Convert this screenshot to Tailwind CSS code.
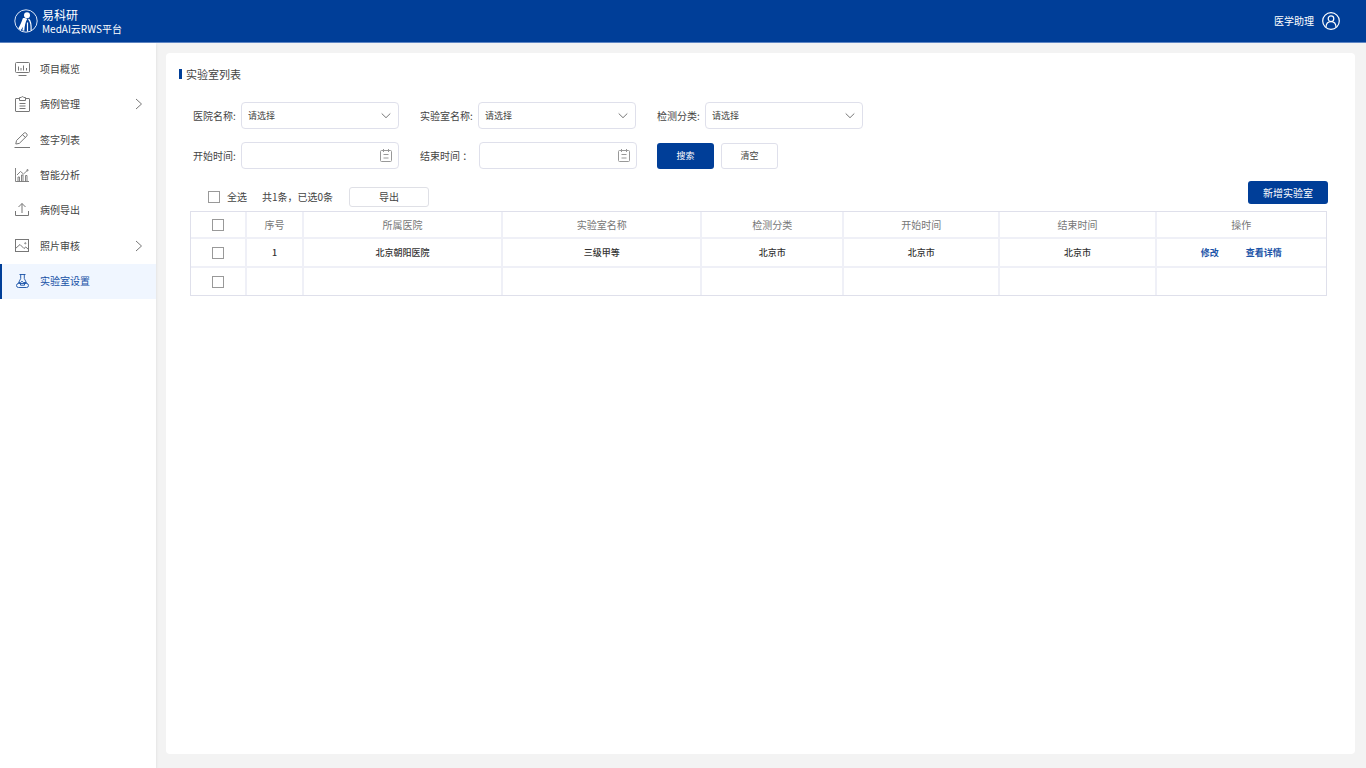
<!DOCTYPE html>
<html lang="zh-CN">
<head>
<meta charset="utf-8">
<meta name="viewport" content="width=device-width, initial-scale=1">
<title>实验室列表 - 易科研</title>
<script src="https://cdn.jsdelivr.net/npm/@tailwindcss/browser@4"></script>
</head>
<body class="min-h-screen flex flex-col bg-[#f3f3f3] text-[10px] leading-4 text-[#444] font-['Noto_Sans_CJK_SC',sans-serif]">

<header class="h-[43px] shrink-0 flex items-center justify-between pl-3.5 pr-[26px] bg-[#003e98] border-b border-[#5f86c4] text-white">
  <a href="#" class="flex items-center gap-1">
    <svg class="size-6" viewBox="0 0 24 24" fill="none" aria-hidden="true">
      <circle cx="12" cy="12" r="11.2" stroke="#dbe6f7" stroke-width="1"/>
      <circle cx="13" cy="6.300" r="3" fill="#fff"/>
      <path d="M8.800 9.300c1.500-.6 3.200-.2 4.400.8-1.700 3-2.500 6.500-2.900 11.700l-2-.4.800-3.600-2.300 3.400-2.500-1.700C6.200 16.500 7.600 13 8.800 9.300z" fill="#fff"/>
      <path d="M14.500 10c2.300 2 2.900 6 2.600 11.800M13.500 13.500v9" stroke="#fff" stroke-width="1.200"/>
    </svg>
    <span class="flex flex-col gap-px">
      <span class="text-[12px] leading-[14px]">易科研</span>
      <span class="text-[10px] leading-3">MedAI云RWS平台</span>
    </span>
  </a>
  <button type="button" class="flex items-center gap-2">
    <span>医学助理</span>
    <svg class="size-[18px]" viewBox="0 0 18 18" fill="none" stroke="#fff" stroke-width="1.200" aria-hidden="true">
      <circle cx="9" cy="9" r="8.300"/>
      <circle cx="9" cy="6.700" r="2.800"/>
      <path d="M4 15.200c.1-3.200 2-5.600 5-5.600s4.900 2.400 5 5.600"/>
    </svg>
  </button>
</header>

<div class="flex flex-1">
  <nav class="w-[156px] shrink-0 pt-2 bg-white shadow-sm" aria-label="主导航">
    <ul class="grid grid-rows-7 h-[248px]">
      <li class="grid"><a href="#" class="flex items-center gap-2.5 pl-3.5 pr-3">
        <svg class="size-4" viewBox="0 0 16 16" fill="none" stroke="#777" aria-hidden="true"><rect x="1.500" y="1.500" width="14" height="10" rx="1"/><path d="M4.500 9.500v-4M7 9.500V7M9.500 9.500v-5M12.500 9.500V7M4.500 14.500h8"/></svg>
        <span>项目概览</span></a></li>
      <li class="grid"><a href="#" class="flex items-center gap-2.5 pl-3.5 pr-3">
        <svg class="size-4" viewBox="0 0 16 16" fill="none" stroke="#777" aria-hidden="true"><path d="M5 2.500H2q-.5 0-.5.500v12q0 .5.500.5h13q.5 0 .5-.5V3q0-.5-.5-.5h-3"/><path d="M5.500 4.500v-3h1.700a1.400 1.400 0 0 1 2.600 0h1.700v3zM5.500 7.500h6M5.500 10h6M5.500 12.500h6"/></svg>
        <span class="flex-1">病例管理</span>
        <svg class="w-2.5 h-3" viewBox="0 0 10 12" fill="none" stroke="#777" aria-hidden="true"><path d="M2 1l5.500 5L2 11"/></svg></a></li>
      <li class="grid"><a href="#" class="flex items-center gap-2.5 pl-3.5 pr-3">
        <svg class="size-4" viewBox="0 0 16 16" fill="none" stroke="#777" aria-hidden="true"><path d="M.5 15.500H16M1.800 12l.7-3.500 7.700-7.500q.8-.7 1.600 0l1.200 1.200q.7.800 0 1.600L5.300 11.400zM8.600 2.700l2.900 2.900"/></svg>
        <span>签字列表</span></a></li>
      <li class="grid"><a href="#" class="flex items-center gap-2.5 pl-3.5 pr-3">
        <svg class="size-4" viewBox="0 0 16 16" fill="none" stroke="#777" stroke-width=".9" aria-hidden="true"><path d="M1.500 1v13.500H15M4 14.500V10h1.500v4.500M7.500 14.500V8H9v6.500M11.500 14.500V8.500H13v6M3 8l3.500-3.500L9.500 7l4-3.700"/><circle cx="13.500" cy="3.200" r=".7"/></svg>
        <span>智能分析</span></a></li>
      <li class="grid"><a href="#" class="flex items-center gap-2.5 pl-3.5 pr-3">
        <svg class="size-4" viewBox="0 0 16 16" fill="none" stroke="#777" aria-hidden="true"><path d="M1.500 9v4.500h13V9M8 11V1.500M4.500 5L8 1.500 11.500 5"/></svg>
        <span>病例导出</span></a></li>
      <li class="grid"><a href="#" class="flex items-center gap-2.5 pl-3.5 pr-3">
        <svg class="size-4" viewBox="0 0 16 16" fill="none" stroke="#777" aria-hidden="true"><rect x="1.500" y="1.500" width="13" height="12"/><path d="M1.500 10.500L6 6.500l4 4 1.800-1.500 2.700 2.500"/><circle cx="11.300" cy="5.300" r=".6"/></svg>
        <span class="flex-1">照片审核</span>
        <svg class="w-2.5 h-3" viewBox="0 0 10 12" fill="none" stroke="#777" aria-hidden="true"><path d="M2 1l5.500 5L2 11"/></svg></a></li>
      <li class="grid"><a href="#" aria-current="page" class="flex items-center gap-2.5 pl-3 pr-3 border-l-2 border-[#003e98] bg-[#f0f6ff] text-[#1650a6]">
        <svg class="size-4" viewBox="0 0 16 16" fill="none" stroke="#1650a6" stroke-width=".9" aria-hidden="true"><path d="M5.500 1.500h6M6.700 1.500v4L4.200 10.500M10.300 1.500v4l2.500 5"/><rect x="2.500" y="10.500" width="12" height="4" rx="2"/><path d="M5 9.500h1.500L8 8.300l1.500 1.200H12M6.500 10.500v1.700M10.500 10.500v1.700M6.500 12.200h4"/></svg>
        <span>实验室设置</span></a></li>
    </ul>
  </nav>

  <main class="flex-1 min-w-0 flex pt-2.5 pl-2.5 pr-[11px] pb-3.5">
    <section class="flex-1 min-w-0 rounded bg-white pt-[11px] pl-6 pr-7 pb-6">
      <h1 class="flex items-center gap-1 h-5 -ml-[11px] text-[11px]">
        <span class="w-[3px] h-2.5 bg-[#003e98]"></span>实验室列表
      </h1>

      <form class="mt-[18px] ml-[3px] flex flex-col gap-[13px]">
        <div class="flex items-center gap-[21px]">
          <div class="flex items-center">
            <label for="hospital" class="w-12">医院名称:</label>
            <div class="relative w-[158px]">
              <select id="hospital" class="block w-full h-[27px] appearance-none rounded border border-[#dfe0eb] bg-white pl-1.5 pr-6 text-[9px]"><option>请选择</option></select>
              <svg class="pointer-events-none absolute right-2 top-2.5 w-2.5 h-2" viewBox="0 0 10 8" fill="none" stroke="#777" aria-hidden="true"><path d="M.7 1.500L5 5.700l4.300-4.200"/></svg>
            </div>
          </div>
          <div class="flex items-center">
            <label for="lab" class="w-[58px]">实验室名称:</label>
            <div class="relative w-[158px]">
              <select id="lab" class="block w-full h-[27px] appearance-none rounded border border-[#dfe0eb] bg-white pl-1.5 pr-6 text-[9px]"><option>请选择</option></select>
              <svg class="pointer-events-none absolute right-2 top-2.5 w-2.5 h-2" viewBox="0 0 10 8" fill="none" stroke="#777" aria-hidden="true"><path d="M.7 1.500L5 5.700l4.300-4.200"/></svg>
            </div>
          </div>
          <div class="flex items-center">
            <label for="category" class="w-12">检测分类:</label>
            <div class="relative w-[158px]">
              <select id="category" class="block w-full h-[27px] appearance-none rounded border border-[#dfe0eb] bg-white pl-1.5 pr-6 text-[9px]"><option>请选择</option></select>
              <svg class="pointer-events-none absolute right-2 top-2.5 w-2.5 h-2" viewBox="0 0 10 8" fill="none" stroke="#777" aria-hidden="true"><path d="M.7 1.500L5 5.700l4.300-4.200"/></svg>
            </div>
          </div>
        </div>
        <div class="flex items-center gap-[21px]">
          <div class="flex items-center">
            <label for="start" class="w-12">开始时间:</label>
            <div class="relative w-[158px]">
              <input id="start" type="text" class="block w-full h-[27px] rounded border border-[#dfe0eb] bg-white pl-1.5 pr-6 text-[9px]">
              <svg class="pointer-events-none absolute right-1.5 top-[7px] w-3.5 h-3.5" viewBox="0 0 14 14" fill="none" stroke="#999" aria-hidden="true"><rect x="1.500" y="1.500" width="11" height="11" rx="1"/><path d="M4.500 0v3M9.500 0v3M4.500 5.500h5M4.500 9h5"/></svg>
            </div>
          </div>
          <div class="flex items-center">
            <label for="end" class="w-[59px] whitespace-nowrap">结束时间 ：</label>
            <div class="relative w-[158px]">
              <input id="end" type="text" class="block w-full h-[27px] rounded border border-[#dfe0eb] bg-white pl-1.5 pr-6 text-[9px]">
              <svg class="pointer-events-none absolute right-1.5 top-[7px] w-3.5 h-3.5" viewBox="0 0 14 14" fill="none" stroke="#999" aria-hidden="true"><rect x="1.500" y="1.500" width="11" height="11" rx="1"/><path d="M4.500 0v3M9.500 0v3M4.500 5.500h5M4.500 9h5"/></svg>
            </div>
          </div>
          <div class="flex items-center gap-[7px] -ml-px">
            <button type="button" class="w-[57px] h-[26px] rounded-[3px] bg-[#003e98] text-white text-[9px]">搜索</button>
            <button type="reset" class="w-[57px] h-[26px] rounded-[3px] border border-[#dfe0eb] bg-white text-[9px]">清空</button>
          </div>
        </div>
      </form>

      <div class="mt-3 h-[30px] flex items-start justify-between -mr-px">
        <div class="flex items-center pt-1.5 pl-[18px]">
          <label class="flex items-center gap-[7px]">
            <input type="checkbox" class="size-3 appearance-none border border-[#999] bg-white checked:bg-[#003e98]">全选
          </label>
          <span class="ml-[15px]">共1条，已选0条</span>
          <button type="button" class="ml-4 w-20 h-5 rounded-[3px] border border-[#dfe0e6] bg-white">导出</button>
        </div>
        <button type="button" class="w-20 h-[23px] rounded-[3px] bg-[#003e98] text-white">新增实验室</button>
      </div>

      <table class="w-full table-fixed border-separate border-spacing-0 border border-[#dfe0eb] text-center [&_td]:border-r-2 [&_th]:border-r-2 [&_td]:border-[#eff0f7] [&_th]:border-[#eff0f7] [&_th]:border-b-2 [&_td]:border-b-2 [&_tr>*:last-child]:border-r-0 [&_tbody>tr:last-child>td]:border-b-0">
        <colgroup>
          <col class="w-[4.94%]"><col class="w-[5.02%]"><col class="w-[17.54%]"><col class="w-[17.54%]"><col class="w-[12.52%]"><col class="w-[13.76%]"><col class="w-[13.76%]"><col>
        </colgroup>
        <thead class="text-[#777]">
          <tr class="h-[27px]">
            <th><input type="checkbox" aria-label="选择全部" class="block mx-auto size-3 appearance-none border border-[#999] bg-white checked:bg-[#003e98]"></th>
            <th class="font-normal">序号</th>
            <th class="font-normal">所属医院</th>
            <th class="font-normal">实验室名称</th>
            <th class="font-normal">检测分类</th>
            <th class="font-normal">开始时间</th>
            <th class="font-normal">结束时间</th>
            <th class="font-normal">操作</th>
          </tr>
        </thead>
        <tbody class="text-[9px] font-medium text-[#333]">
          <tr class="h-[29px]">
            <td><input type="checkbox" aria-label="选择第1行" class="block mx-auto size-3 appearance-none border border-[#999] bg-white checked:bg-[#003e98]"></td>
            <td>1</td>
            <td>北京朝阳医院</td>
            <td>三级甲等</td>
            <td>北京市</td>
            <td>北京市</td>
            <td>北京市</td>
            <td><div class="flex justify-center gap-[27px] font-bold text-[#1c55a8]"><a href="#">修改</a><a href="#">查看详情</a></div></td>
          </tr>
          <tr class="h-[27px]">
            <td><input type="checkbox" aria-label="选择第2行" class="block mx-auto size-3 appearance-none border border-[#999] bg-white checked:bg-[#003e98]"></td>
            <td></td><td></td><td></td><td></td><td></td><td></td><td></td>
          </tr>
        </tbody>
      </table>
    </section>
  </main>
</div>
</body>
</html>
